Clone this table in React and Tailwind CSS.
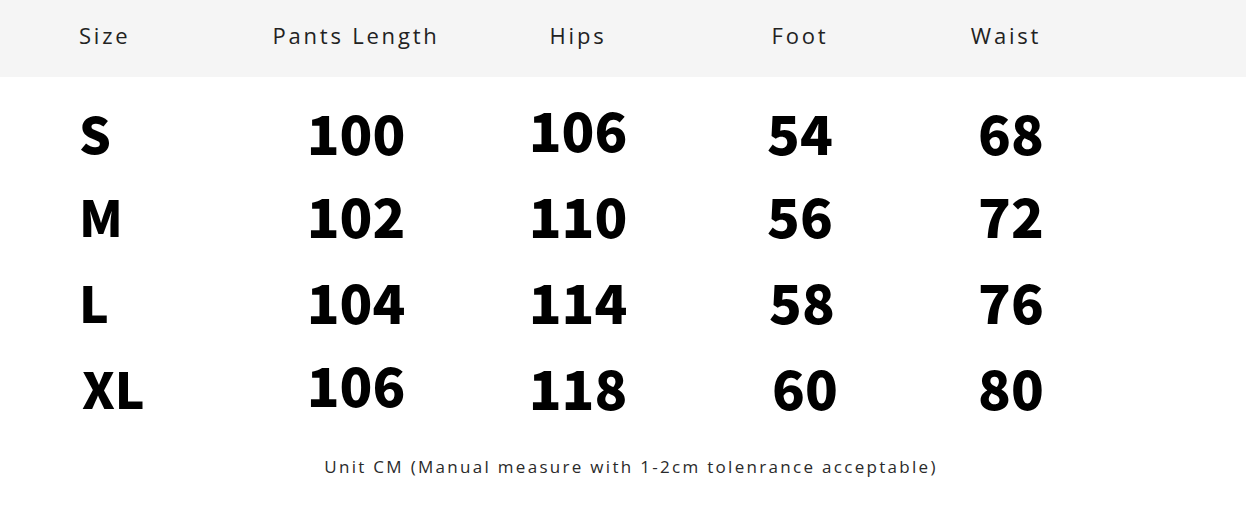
import React from "react";

const rows = [
  { size: "S", vals: ["100", "106", "54", "68"], h: "h-[82px]", sp: "pl-[79px]", adj: ["", "mb-[6px]", "", ""] },
  { size: "M", vals: ["102", "110", "56", "72"], h: "h-[84px]", sp: "pl-[79px]", adj: ["", "", "", ""] },
  { size: "L", vals: ["104", "114", "58", "76"], h: "h-[87px]", sp: "pl-[79px]", adj: ["", "", "pl-[4px]", ""] },
  { size: "XL", vals: ["106", "118", "60", "80"], h: "h-[85px]", sp: "pl-[82px]", adj: ["mb-[6px]", "", "pl-[10px]", ""] },
];

const headers = ["Pants Length", "Hips", "Foot", "Waist"];
const widths = ["w-[222px]", "w-[222px]", "w-[222px]", "w-[200px]"];
const hwidths = ["w-[222px]", "w-[222px]", "w-[222px]", "w-[190px]"];

export default function App() {
  return (
    <div className="w-[1246px] h-[505px] bg-white overflow-hidden text-black">
      <div
        className="h-[77px] bg-[#f5f5f5] flex items-center text-[22px] text-[#222] tracking-[2.8px]"
        style={{ fontFamily: '"Open Sans", sans-serif' }}
      >
        <div className="w-[245px] pl-[79px] pb-[7px]">Size</div>
        {headers.map((h, i) => (
          <div key={h} className={`${hwidths[i]} text-center pb-[7px]`}>
            {h}
          </div>
        ))}
      </div>
      <div
        className="flex flex-col pt-[14px]"
        style={{ fontFamily: '"Noto Sans CJK SC", sans-serif' }}
      >
        {rows.map((r) => (
          <div key={r.size} className={`${r.h} flex items-center font-black`}>
            <div className={`w-[245px] ${r.sp} text-[50px] leading-none`}>{r.size}</div>
            {r.vals.map((v, i) => (
              <div key={i} className={`${widths[i]} ${r.adj[i]} text-center text-[54px] leading-none`}>
                {v}
              </div>
            ))}
          </div>
        ))}
      </div>
      <div
        className="mt-[25px] pl-[16px] text-center text-[17px] text-[#2a2a2a] tracking-[2.3px]"
        style={{ fontFamily: '"Open Sans", sans-serif' }}
      >
        Unit CM (Manual measure with 1-2cm tolenrance acceptable)
      </div>
    </div>
  );
}
